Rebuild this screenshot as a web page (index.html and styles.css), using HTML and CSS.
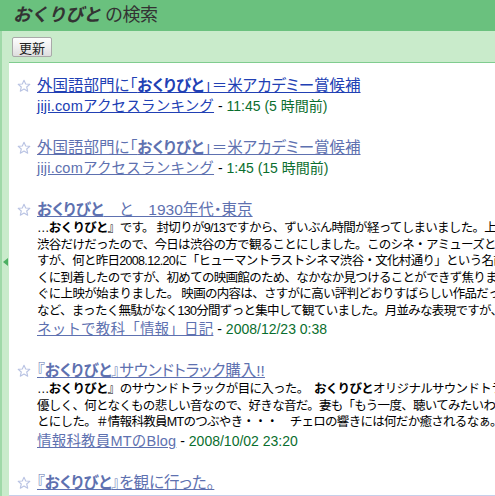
FILE: index.html
```html
<!DOCTYPE html>
<html lang="ja">
<head>
<meta charset="utf-8">
<title>おくりびと の検索</title>
<link rel="stylesheet" href="styles.css">
</head>
<body>
<div class="header">
  <h1 class="heading"><span class="query">おくりびと</span> の検索</h1>
</div>
<div class="main">
  <div class="side"><span class="arrow"></span></div>
  <div class="content">
    <div class="toolbar"><button class="refresh">更新</button></div>
    <div class="panel">
      <div class="entry">
        <svg class="star" viewBox="0 0 14 14" width="14" height="14"><path d="M7 1.2 L8.7 5 L12.8 5.3 L9.7 8 L10.7 12.2 L7 10 L3.3 12.2 L4.3 8 L1.2 5.3 L5.3 5 Z" fill="#fff" stroke="#b9c3e3" stroke-width="1.1" stroke-linejoin="round"/></svg>
        <div class="body">
          <a class="title-link new" href="#">外国語部門に「<b>おくりびと</b>」＝米アカデミー賞候補</a>
          <div class="source"><a class="src-link new" href="#">jiji.comアクセスランキング</a> <span class="sep">-</span> <span class="time">11:45 (5 時間前)</span></div>
        </div>
      </div>
      <div class="entry">
        <svg class="star" viewBox="0 0 14 14" width="14" height="14"><path d="M7 1.2 L8.7 5 L12.8 5.3 L9.7 8 L10.7 12.2 L7 10 L3.3 12.2 L4.3 8 L1.2 5.3 L5.3 5 Z" fill="#fff" stroke="#b9c3e3" stroke-width="1.1" stroke-linejoin="round"/></svg>
        <div class="body">
          <a class="title-link" href="#">外国語部門に「<b>おくりびと</b>」＝米アカデミー賞候補</a>
          <div class="source"><a class="src-link" href="#">jiji.comアクセスランキング</a> <span class="sep">-</span> <span class="time">1:45 (15 時間前)</span></div>
        </div>
      </div>
      <div class="entry">
        <svg class="star" viewBox="0 0 14 14" width="14" height="14"><path d="M7 1.2 L8.7 5 L12.8 5.3 L9.7 8 L10.7 12.2 L7 10 L3.3 12.2 L4.3 8 L1.2 5.3 L5.3 5 Z" fill="#fff" stroke="#b9c3e3" stroke-width="1.1" stroke-linejoin="round"/></svg>
        <div class="body">
          <a class="title-link" href="#"><b>おくりびと</b>　と　1930年代・東京</a>
          <div class="snippet">
            <div class="line">…<b>おくりびと</b>』です。 封切りが9/13ですから、ずいぶん時間が経ってしまいました。上映館が</div>
            <div class="line">渋谷だけだったので、今日は渋谷の方で観ることにしました。このシネ・アミューズという</div>
            <div class="line">すが、何と昨日2008.12.20に「ヒューマントラストシネマ渋谷・文化村通り」という名前に</div>
            <div class="line">くに到着したのですが、初めての映画館のため、なかなか見つけることができず焦りま</div>
            <div class="line">ぐに上映が始まりました。 映画の内容は、さすがに高い評判どおりすばらしい作品だった</div>
            <div class="line">など、まったく無駄がなく130分間ずっと集中して観ていました。月並みな表現ですが、</div>
          </div>
          <div class="source"><a class="src-link" href="#">ネットで教科「情報」日記</a> <span class="sep">-</span> <span class="time">2008/12/23 0:38</span></div>
        </div>
      </div>
      <div class="entry">
        <svg class="star" viewBox="0 0 14 14" width="14" height="14"><path d="M7 1.2 L8.7 5 L12.8 5.3 L9.7 8 L10.7 12.2 L7 10 L3.3 12.2 L4.3 8 L1.2 5.3 L5.3 5 Z" fill="#fff" stroke="#b9c3e3" stroke-width="1.1" stroke-linejoin="round"/></svg>
        <div class="body">
          <a class="title-link" href="#">『<b>おくりびと</b>』サウンドトラック購入!!</a>
          <div class="snippet">
            <div class="line">…<b>おくりびと</b>』のサウンドトラックが目に入った。　<b>おくりびと</b>オリジナルサウンドトラック</div>
            <div class="line">優しく、何となくもの悲しい音なので、好きな音だ。妻も「もう一度、聴いてみたいわ」な</div>
            <div class="line">とにした。＃情報科教員MTのつぶやき・・・　チェロの響きには何だか癒されるなぁ。</div>
          </div>
          <div class="source"><a class="src-link" href="#">情報科教員MTのBlog</a> <span class="sep">-</span> <span class="time">2008/10/02 23:20</span></div>
        </div>
      </div>
      <div class="entry">
        <svg class="star" viewBox="0 0 14 14" width="14" height="14"><path d="M7 1.2 L8.7 5 L12.8 5.3 L9.7 8 L10.7 12.2 L7 10 L3.3 12.2 L4.3 8 L1.2 5.3 L5.3 5 Z" fill="#fff" stroke="#b9c3e3" stroke-width="1.1" stroke-linejoin="round"/></svg>
        <div class="body">
          <a class="title-link" href="#">『<b>おくりびと</b>』を観に行った。</a>
        </div>
      </div>
    </div>
  </div>
</div>
</body>
</html>
```
FILE: styles.css
```css
html, body {
  margin: 0;
  padding: 0;
}
body {
  width: 495px;
  height: 496px;
  overflow: hidden;
  background: #c9ebcb;
  font-family: "Liberation Sans", "Noto Sans CJK JP", sans-serif;
  color: #000;
}
.header {
  height: 31px;
  background: #6ac17e;
}
.heading {
  margin: 0;
  padding-left: 13px;
  font-size: 18px;
  line-height: 31px;
  font-weight: normal;
  color: #333;
  letter-spacing: -0.5px;
}
.query {
  font-weight: bold;
  font-style: italic;
}
.main {
  display: flex;
  height: 465px;
}
.side {
  width: 7px;
  border-left: 2px solid #9fd9a8;
  display: flex;
  align-items: center;
  flex: none;
}
.arrow {
  width: 0;
  height: 0;
  margin-left: 1px;
  margin-top: -3px;
  border-right: 5px solid #4caf62;
  border-top: 4.5px solid transparent;
  border-bottom: 4.5px solid transparent;
}
.content {
  flex: 1;
  min-width: 0;
  display: flex;
  flex-direction: column;
}
.toolbar {
  padding: 6px 0 5px 3px;
}
.refresh {
  display: block;
  width: 40px;
  height: 20px;
  padding: 0;
  font-family: "Liberation Sans", "Noto Sans CJK JP", sans-serif;
  font-size: 13px;
  color: #222;
  border: 1px solid #a9a9a9;
  border-radius: 2px;
  background: linear-gradient(#fdfdfd, #efefef 50%, #dedede);
}
.panel {
  height: 427px;
  background: #fff;
  border-top: 1px solid #80cc8f;
  border-bottom: 1px solid #c6cfea;
  padding: 13px 0 0 8px;
  box-sizing: content-box;
  overflow: hidden;
}
.entry {
  display: flex;
  margin-bottom: 22px;
}
.star {
  flex: none;
  margin-top: 3px;
  margin-right: 6px;
}
.body {
  white-space: nowrap;
}
.title-link {
  display: block;
  font-size: 15.5px;
  line-height: 20px;
  letter-spacing: 0;
  font-feature-settings: "palt";
  color: #5e71b0;
  text-decoration: underline;
}
.title-link.new,
.src-link.new {
  color: #2140b4;
}
.snippet {
  font-size: 12.5px;
  line-height: 16.5px;
  letter-spacing: -0.7px;
  color: #000;
}
.source {
  font-size: 14px;
  line-height: 20px;
}
.src-link {
  font-size: 14.5px;
  color: #5e71b0;
  letter-spacing: 0.2px;
  text-decoration: underline;
}
.sep {
  color: #000;
}
.time {
  color: #0a6e2e;
}
```
